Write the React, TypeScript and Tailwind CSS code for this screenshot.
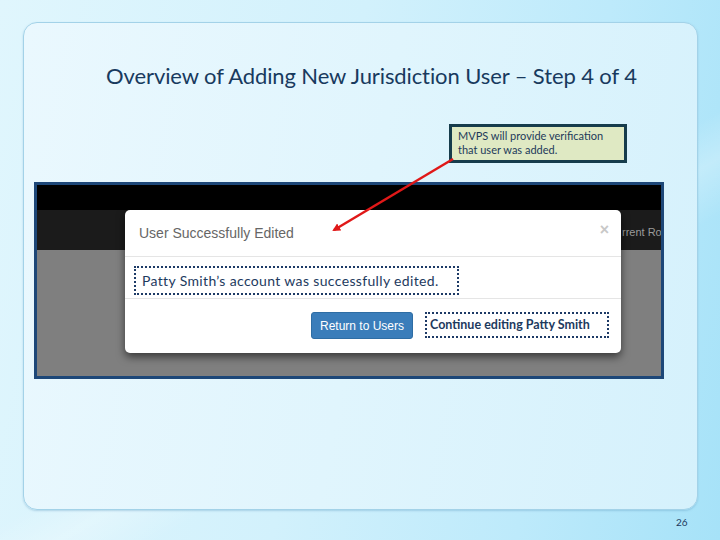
import React from "react";

export default function App() {
  return (
    <div className="relative w-[720px] h-[540px] overflow-hidden bg-[linear-gradient(100deg,#e0f6fd_0%,#d2f1fc_45%,#bdeafb_75%,#a6e2f8_100%)] font-['Lato',sans-serif]">
      {/* soft diagonal streaks */}
      <div className="absolute inset-0 bg-[linear-gradient(150deg,transparent_0%,transparent_55%,rgba(255,255,255,0.25)_60%,transparent_66%)]" />
      <div className="relative pt-[22px] pl-[23px]">
        <div className="relative w-[675px] h-[488px] rounded-[14px] border border-[#a3d2e8] bg-[linear-gradient(100deg,#eaf8fe_0%,#e0f5fd_50%,#d5f1fc_100%)] shadow-[0_1px_2px_rgba(90,150,190,0.35)]">
          <div className="pt-[39px] text-center text-[22px] leading-[28px] text-[#183a5e] tracking-[-0.1px] pl-[22px]">
            Overview of Adding New Jurisdiction User – Step 4 of 4
          </div>
          <div className="mt-[34px] ml-[425px] w-[178px] h-[39px] border-[3px] border-[#163c4c] bg-[#dfe9c3] px-[6px] pt-[2px] text-[11px] leading-[14px] text-[#1d3a5a]">
            MVPS will provide verification
            <br />
            that user was added.
          </div>
          <div className="relative mt-[19px] ml-[10px] w-[630px] h-[197px] border-[3px] border-[#1d4778] bg-[#7f7f7f] overflow-hidden">
            <div className="h-[25px] bg-black" />
            <div className="h-[40px] bg-[#1b1b1b]" />
            <span className="absolute left-[585px] top-[39px] text-[11px] text-[#9a9a9a] font-['Liberation_Sans',sans-serif] whitespace-nowrap">
              rrent Ro
            </span>
            {/* modal */}
            <div className="absolute left-[88px] top-[25px] w-[496px] h-[143px] rounded-[5px] bg-white shadow-[0_4px_8px_rgba(0,0,0,0.55)] flex flex-col">
              <div className="h-[47px] flex items-center justify-between pl-[14px] pr-[12px] border-b border-[#e5e5e5]">
                <span className="text-[14px] text-[#666] font-['Liberation_Sans',sans-serif] mt-[1px]">
                  User Successfully Edited
                </span>
                <span className="text-[16px] font-bold text-[#c8c8c8] font-['Liberation_Sans',sans-serif] -mt-[6px]">
                  ×
                </span>
              </div>
              <div className="h-[42px] flex items-end pb-[3px] pl-[9px] border-b border-[#e5e5e5]">
                <div className="w-[325px] h-[29px] border-[2px] border-dotted border-[#1d3a66] flex items-center pl-[6px] text-[14px] text-[#1d3a5e] tracking-[0.35px]">
                  Patty Smith’s account was successfully edited.
                </div>
              </div>
              <div className="flex-1 flex items-start justify-end pt-[13px] pr-[12px] gap-[12px]">
                <div className="w-[102px] h-[27px] rounded-[3px] bg-[#3a7dba] border border-[#2e6da4] flex items-center justify-center text-[12px] text-white font-['Liberation_Sans',sans-serif]">
                  Return to Users
                </div>
                <div className="w-[184px] h-[26px] border-[2px] border-dotted border-[#1d3a66] flex items-center pl-[3px] text-[12.5px] font-bold text-[#1d3a5e]">
                  Continue editing Patty Smith
                </div>
              </div>
            </div>
          </div>
        </div>
        <div className="absolute left-[676px] top-[515px] text-[10px] text-[#1d3a5e]">26</div>
      </div>
      {/* red arrow */}
      <svg className="absolute left-0 top-0 pointer-events-none" width="720" height="540">
        <defs>
          <marker id="ah" markerWidth="8" markerHeight="8" refX="6" refY="4" orient="auto" markerUnits="userSpaceOnUse">
            <path d="M0,0 L8,4 L0,8 Z" fill="#e01818" />
          </marker>
        </defs>
        <line x1="453" y1="159" x2="334" y2="230" stroke="#e01818" strokeWidth="2.5" markerEnd="url(#ah)" />
      </svg>
    </div>
  );
}
